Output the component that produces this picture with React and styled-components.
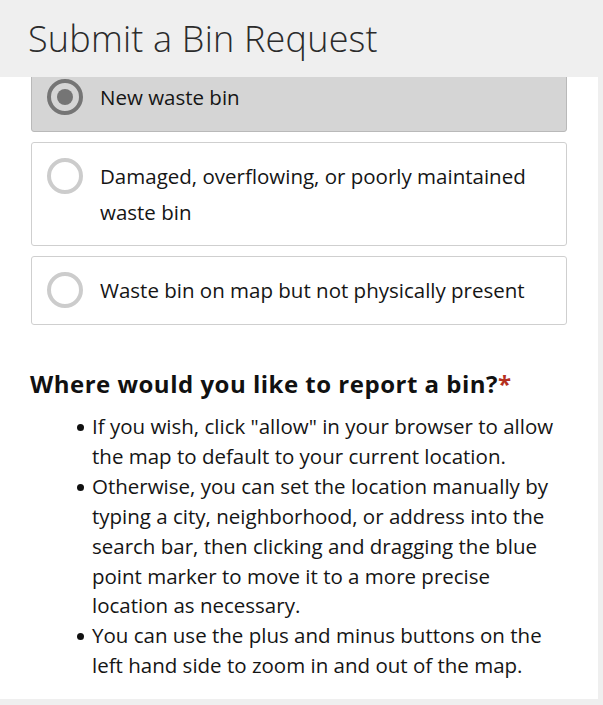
import styled, { createGlobalStyle } from "styled-components";

const GlobalStyle = createGlobalStyle`
  html, body {
    margin: 0;
    padding: 0;
    background: #efefef;
  }
  body {
    font-family: "Open Sans", Lato, sans-serif;
    color: #151515;
  }
`;

const Page = styled.div`
  display: flex;
  flex-direction: column;
  width: 603px;
  height: 705px;
  background: #efefef;
  overflow: hidden;
`;

const Header = styled.header`
  position: relative;
  z-index: 1;
  flex: 0 0 77px;
  display: flex;
  align-items: center;
  padding-left: 28px;
  background: #efefef;
  h1 {
    margin: 0;
    font-size: 36px;
    font-weight: 300;
    color: #2b2b2b;
    letter-spacing: 0.2px;
  }
`;

const Scroller = styled.div`
  flex: 1;
  margin: 0 5px 6px 0;
  background: #fff;
  overflow: hidden;
`;

/* the form is scrolled a little: the first choice slides under the header */
const Content = styled.div`
  margin-top: -14px;
  padding: 0 31px 30px 31px;
`;

const Choices = styled.div`
  display: flex;
  flex-direction: column;
  gap: 10px;
`;

const Choice = styled.label`
  display: flex;
  align-items: flex-start;
  gap: 17px;
  min-height: 69px;
  padding: 15px 20px 15px 15px;
  box-sizing: border-box;
  background: ${(p) => (p.$checked ? "#d5d5d5" : "#fff")};
  border: 1px solid ${(p) => (p.$checked ? "#b9b9b9" : "#cfcfcf")};
  border-radius: 3px;
  font-size: 20.5px;
  line-height: 36px;
  color: #151515;
`;

const Radio = styled.span`
  flex: 0 0 auto;
  width: 36px;
  height: 36px;
  box-sizing: border-box;
  border-radius: 50%;
  border: 4px solid ${(p) => (p.$checked ? "#757575" : "#cccccc")};
  display: flex;
  align-items: center;
  justify-content: center;
  &::after {
    content: "";
    width: 16px;
    height: 16px;
    border-radius: 50%;
    background: ${(p) => (p.$checked ? "#757575" : "transparent")};
  }
`;

const Question = styled.h2`
  margin: 42px 0 12px -1px;
  font-size: 24px;
  font-weight: 700;
  letter-spacing: 0.5px;
  color: #111;
  span {
    color: #b5311f;
  }
`;

const Hints = styled.ul`
  margin: 0;
  padding: 0 0 0 61px;
  list-style: none;
  font-size: 20.5px;
  line-height: 29.9px;
  color: #151515;
  li {
    position: relative;
  }
  li::before {
    content: "";
    position: absolute;
    left: -15px;
    top: 12px;
    width: 7px;
    height: 7px;
    border-radius: 50%;
    background: #111;
  }
`;

const options = [
  { label: "New waste bin", checked: true },
  { label: "Damaged, overflowing, or poorly maintained waste bin" },
  { label: "Waste bin on map but not physically present" },
];

const hints = [
  'If you wish, click "allow" in your browser to allow the map to default to your current location.',
  "Otherwise, you can set the location manually by typing a city, neighborhood, or address into the search bar, then clicking and dragging the blue point marker to move it to a more precise location as necessary.",
  "You can use the plus and minus buttons on the left hand side to zoom in and out of the map.",
];

export default function App() {
  return (
    <>
      <GlobalStyle />
      <Page>
        <Header>
          <h1>Submit a Bin Request</h1>
        </Header>
        <Scroller>
          <Content>
            <Choices>
              {options.map((o) => (
                <Choice key={o.label} $checked={o.checked}>
                  <Radio $checked={o.checked} />
                  <span>{o.label}</span>
                </Choice>
              ))}
            </Choices>
            <Question>
              Where would you like to report a bin?<span>*</span>
            </Question>
            <Hints>
              {hints.map((h) => (
                <li key={h}>{h}</li>
              ))}
            </Hints>
          </Content>
        </Scroller>
      </Page>
    </>
  );
}
